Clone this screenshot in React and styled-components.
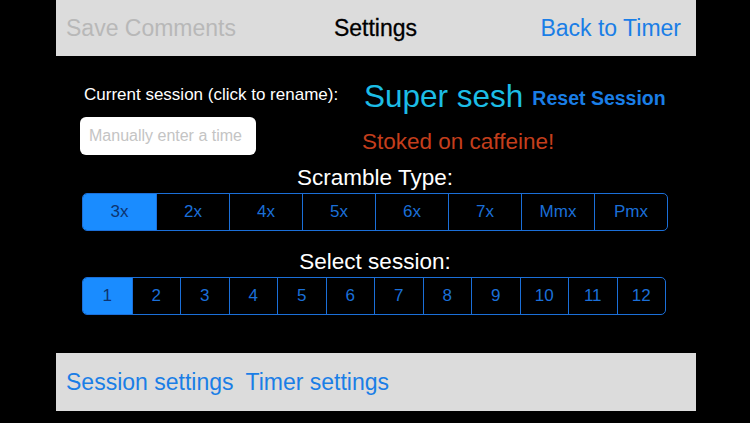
import React from 'react'
import styled, { createGlobalStyle } from 'styled-components'

const GlobalStyle = createGlobalStyle`
    html, body {
        margin: 0;
        padding: 0;
        background: #000;
        font-family: 'Liberation Sans', Arial, Helvetica, sans-serif;
    }
`

const colors = {
    bar: '#dcdcdc',
    blue: '#1a7ee6',
    segBlue: '#1b6fd8',
    selected: '#1a8cff',
    cyan: '#1cbde6',
    orange: '#c43e1c',
    muted: '#b8b8b8',
}

const Screen = styled.div`
    width: 750px;
    height: 423px;
    background: #000;
    overflow: hidden;
`
const Panel = styled.div`
    width: 640px;
    height: 411px;
    margin-left: 56px;
    display: flex;
    flex-direction: column;
`
const TopBar = styled.header`
    height: 56px;
    background: ${colors.bar};
    display: grid;
    grid-template-columns: 1fr auto 1fr;
    align-items: center;
    padding: 0 15px 0 10px;
    font-size: 23px;
`
const BarButton = styled.span`
    color: ${(p) => p.$color};
    justify-self: ${(p) => p.$align || 'start'};
`
const Title = styled.span`
    color: #000;
    margin-left: 4px;
    -webkit-text-stroke: 0.3px #000;
`
const Main = styled.main`
    flex: 1;
    display: flex;
    flex-direction: column;
    padding: 0 26px 0 24px;
`
const InfoGrid = styled.div`
    display: grid;
    grid-template-columns: 282px 1fr;
    margin-top: 20px;
`
const SessionLabel = styled.span`
    color: #fff;
    font-size: 17px;
    padding-left: 4px;
    align-self: center;
    margin-top: 1px;
`
const SessionName = styled.div`
    display: flex;
    align-items: baseline;
    gap: 9px;
`
const Name = styled.span`
    color: ${colors.cyan};
    font-size: 31.5px;
    padding-left: 2px;
    position: relative;
    top: 2px;
`
const ResetButton = styled.span`
    color: ${colors.blue};
    font-size: 19.5px;
    font-weight: bold;
`
const TimeInput = styled.input`
    width: 176px;
    height: 38px;
    box-sizing: border-box;
    margin-top: 4px;
    border: none;
    border-radius: 6px;
    background: #fff;
    padding: 0 9px;
    font-family: inherit;
    font-size: 16px;
    &::placeholder {
        color: #c4c4c4;
    }
`
const Quote = styled.span`
    color: ${colors.orange};
    font-size: 22.5px;
    align-self: center;
    margin-top: 15px;
`
const SectionLabel = styled.div`
    color: #fff;
    font-size: 22.5px;
    text-align: center;
    line-height: 26px;
    margin-top: ${(p) => p.$top}px;
    margin-bottom: 2px;
`
const Segmented = styled.div`
    display: grid;
    grid-template-columns: repeat(${(p) => p.$count}, 1fr);
    width: ${(p) => p.$width}px;
    margin-left: 2px;
    height: 38px;
    border: 1.5px solid ${colors.segBlue};
    border-radius: 5px;
    overflow: hidden;
    box-sizing: border-box;
`
const Segment = styled.div`
    display: flex;
    align-items: center;
    justify-content: center;
    font-size: 17px;
    color: ${(p) => (p.$active ? '#0d3470' : colors.segBlue)};
    background: ${(p) => (p.$active ? colors.selected : 'transparent')};
    & + & {
        border-left: 1.5px solid ${colors.segBlue};
    }
`
const BottomBar = styled.footer`
    height: 58px;
    background: ${colors.bar};
    display: flex;
    align-items: center;
    gap: 12px;
    padding-left: 10px;
    font-size: 23px;
    color: ${colors.blue};
`

const scrambles = ['3x', '2x', '4x', '5x', '6x', '7x', 'Mmx', 'Pmx']
const sessions = Array.from({ length: 12 }, (_, i) => String(i + 1))

function App() {
    return (
        <Screen>
            <GlobalStyle />
            <Panel>
                <TopBar>
                    <BarButton $color={colors.muted}>Save Comments</BarButton>
                    <Title>Settings</Title>
                    <BarButton $color={colors.blue} $align="end">
                        Back to Timer
                    </BarButton>
                </TopBar>
                <Main>
                    <InfoGrid>
                        <SessionLabel>Current session (click to rename):</SessionLabel>
                        <SessionName>
                            <Name>Super sesh</Name>
                            <ResetButton>Reset Session</ResetButton>
                        </SessionName>
                        <TimeInput placeholder="Manually enter a time" />
                        <Quote>Stoked on caffeine!</Quote>
                    </InfoGrid>
                    <SectionLabel $top={10}>Scramble Type:</SectionLabel>
                    <Segmented $count={8} $width={586}>
                        {scrambles.map((s, i) => (
                            <Segment key={s} $active={i === 0}>
                                {s}
                            </Segment>
                        ))}
                    </Segmented>
                    <SectionLabel $top={18}>Select session:</SectionLabel>
                    <Segmented $count={12} $width={584}>
                        {sessions.map((s, i) => (
                            <Segment key={s} $active={i === 0}>
                                {s}
                            </Segment>
                        ))}
                    </Segmented>
                </Main>
                <BottomBar>
                    <span>Session settings</span>
                    <span>Timer settings</span>
                </BottomBar>
            </Panel>
        </Screen>
    )
}

export default App
